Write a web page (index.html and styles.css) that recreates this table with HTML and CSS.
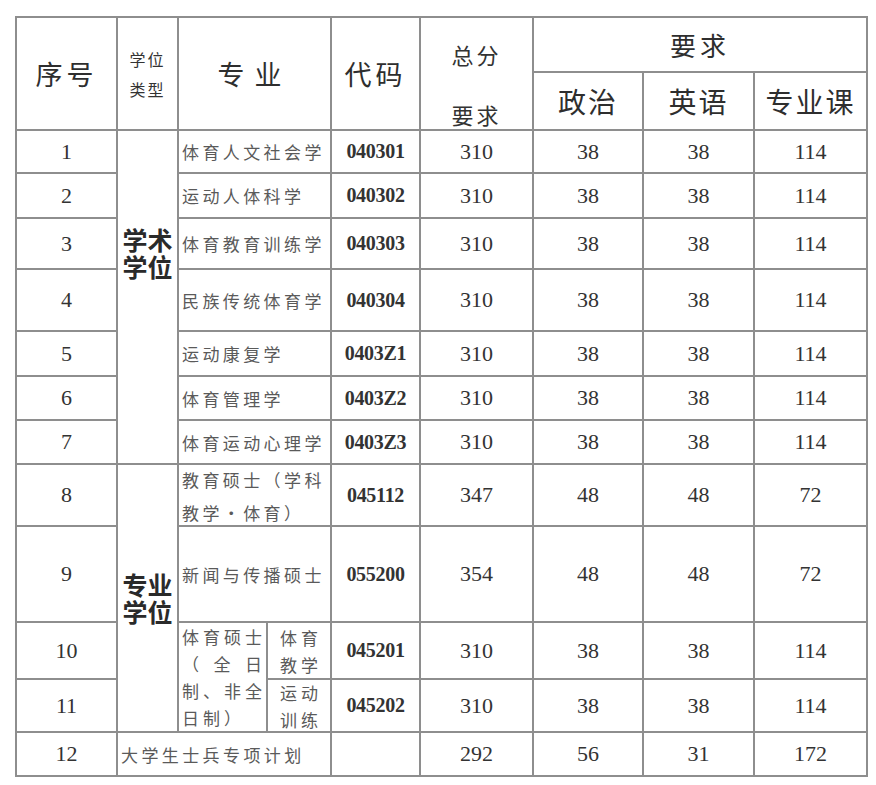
FILE: index.html
```html
<!DOCTYPE html>
<html lang="zh-CN">
<head>
<meta charset="utf-8">
<title>复试分数线</title>
<link rel="stylesheet" href="styles.css">
</head>
<body>
<table class="score">
  <colgroup>
    <col class="c-seq"><col class="c-type"><col class="c-ma"><col class="c-mb"><col class="c-code"><col class="c-total"><col class="c-pol"><col class="c-eng"><col class="c-course">
  </colgroup>
  <tr class="h1">
    <td rowspan="2" class="hd">序号</td>
    <td rowspan="2" class="hd-small">学位<br>类型</td>
    <td rowspan="2" colspan="2" class="hd hd-major">专业</td>
    <td rowspan="2" class="hd">代码</td>
    <td rowspan="2" class="hd-total"><span class="ln">总分</span><span class="ln ln2">要求</span></td>
    <td colspan="3" class="hd hd-req">要求</td>
  </tr>
  <tr class="h2">
    <td class="hd hd-sub">政治</td>
    <td class="hd hd-sub">英语</td>
    <td class="hd hd-sub">专业课</td>
  </tr>
  <tr class="r1">
    <td class="num">1</td>
    <td rowspan="7" class="type type-top">学术<br>学位</td>
    <td colspan="2" class="name">体育人文社会学</td>
    <td class="code">040301</td>
    <td class="num">310</td><td class="num">38</td><td class="num">38</td><td class="num">114</td>
  </tr>
  <tr class="r2">
    <td class="num">2</td>
    <td colspan="2" class="name">运动人体科学</td>
    <td class="code">040302</td>
    <td class="num">310</td><td class="num">38</td><td class="num">38</td><td class="num">114</td>
  </tr>
  <tr class="r3">
    <td class="num">3</td>
    <td colspan="2" class="name">体育教育训练学</td>
    <td class="code">040303</td>
    <td class="num">310</td><td class="num">38</td><td class="num">38</td><td class="num">114</td>
  </tr>
  <tr class="r4">
    <td class="num">4</td>
    <td colspan="2" class="name">民族传统体育学</td>
    <td class="code">040304</td>
    <td class="num">310</td><td class="num">38</td><td class="num">38</td><td class="num">114</td>
  </tr>
  <tr class="r5">
    <td class="num">5</td>
    <td colspan="2" class="name">运动康复学</td>
    <td class="code">0403Z1</td>
    <td class="num">310</td><td class="num">38</td><td class="num">38</td><td class="num">114</td>
  </tr>
  <tr class="r6">
    <td class="num">6</td>
    <td colspan="2" class="name">体育管理学</td>
    <td class="code">0403Z2</td>
    <td class="num">310</td><td class="num">38</td><td class="num">38</td><td class="num">114</td>
  </tr>
  <tr class="r7">
    <td class="num">7</td>
    <td colspan="2" class="name">体育运动心理学</td>
    <td class="code">0403Z3</td>
    <td class="num">310</td><td class="num">38</td><td class="num">38</td><td class="num">114</td>
  </tr>
  <tr class="r8">
    <td class="num">8</td>
    <td rowspan="4" class="type">专业<br>学位</td>
    <td colspan="2" class="name name-wrap"><div class="wrap2">教育硕士（学科<br>教学・体育）</div></td>
    <td class="code">045112</td>
    <td class="num">347</td><td class="num">48</td><td class="num">48</td><td class="num">72</td>
  </tr>
  <tr class="r9">
    <td class="num">9</td>
    <td colspan="2" class="name">新闻与传播硕士</td>
    <td class="code">055200</td>
    <td class="num">354</td><td class="num">48</td><td class="num">48</td><td class="num">72</td>
  </tr>
  <tr class="r10">
    <td class="num">10</td>
    <td rowspan="2" class="name-just"><span class="jl">体育硕士</span><span class="jl">（全日</span><span class="jl">制、非全</span><span class="jl last">日制）</span></td>
    <td class="sub"><div class="sub-box">体育<br>教学</div></td>
    <td class="code">045201</td>
    <td class="num">310</td><td class="num">38</td><td class="num">38</td><td class="num">114</td>
  </tr>
  <tr class="r11">
    <td class="num">11</td>
    <td class="sub"><div class="sub-box">运动<br>训练</div></td>
    <td class="code">045202</td>
    <td class="num">310</td><td class="num">38</td><td class="num">38</td><td class="num">114</td>
  </tr>
  <tr class="r12">
    <td class="num">12</td>
    <td colspan="3" class="name">大学生士兵专项计划</td>
    <td class="code"></td>
    <td class="num">292</td><td class="num">56</td><td class="num">31</td><td class="num">172</td>
  </tr>
</table>
</body>
</html>
```
FILE: styles.css
```css
html, body {
  margin: 0;
  padding: 0;
  background: #ffffff;
}
body {
  padding: 16px 0 0 15px;
}
.score {
  border-collapse: collapse;
  table-layout: fixed;
  width: 851px;
  color: #333333;
}
.score td {
  border: 2px solid #8e8e8e;
  padding: 0;
  text-align: center;
  vertical-align: middle;
  overflow: hidden;
}
.c-seq { width: 101px; }
.c-type { width: 61px; }
.c-ma { width: 89px; }
.c-mb { width: 64px; }
.c-code { width: 89px; }
.c-total { width: 113px; }
.c-pol { width: 110px; }
.c-eng { width: 111px; }
.c-course { width: 113px; }

.h1 { height: 55px; }
.h2 { height: 58px; }
.r1 { height: 43px; }
.r2 { height: 45px; }
.r3 { height: 51px; }
.r4 { height: 62px; }
.r5 { height: 45px; }
.r6 { height: 44px; }
.r7 { height: 44px; }
.r8 { height: 62px; }
.r9 { height: 96px; }
.r10 { height: 57px; }
.r11 { height: 53px; }
.r12 { height: 44px; }

.hd {
  font-family: "Noto Sans CJK SC", sans-serif;
  font-size: 27px;
  letter-spacing: 4px;
  line-height: 30px;
  color: #2e2e2e;
}
.hd-major { letter-spacing: 10px; padding-left: 8px; }
.hd-req { padding-top: 12px; font-size: 26px; }
.hd-sub { font-size: 28px; letter-spacing: 2px; padding-top: 4px; }
.hd-small {
  font-family: "Noto Sans CJK SC", sans-serif;
  font-size: 16px;
  line-height: 30px;
  letter-spacing: 2px;
  color: #333333;
}
.hd-total {
  font-family: "Noto Sans CJK SC", sans-serif;
  font-size: 22px;
  letter-spacing: 3px;
  vertical-align: top !important;
  padding-top: 21px !important;
}
.hd-total .ln {
  display: block;
  line-height: 30px;
}
.hd-total .ln2 {
  margin-top: 30px;
}

.num {
  font-family: "Liberation Serif", "Times New Roman", serif;
  font-size: 22px;
  color: #333333;
}
.code {
  font-family: "Liberation Serif", "Times New Roman", serif;
  font-size: 20px;
  font-weight: bold;
  color: #333333;
  letter-spacing: -0.3px;
}
.name {
  font-family: "Noto Sans CJK SC", sans-serif;
  font-size: 17px;
  letter-spacing: 3.4px;
  color: #5a5a5a;
  text-align: left !important;
  padding-left: 3px !important;
  white-space: nowrap;
}
.name-wrap .wrap2 {
  height: 56px;
  line-height: 33px;
  display: flex;
  flex-direction: column;
  justify-content: center;
  white-space: nowrap;
  padding-top: 1px;
}
.type {
  font-family: "Noto Sans CJK SC", sans-serif;
  font-size: 25px;
  font-weight: bold;
  line-height: 27px;
  color: #2a2a2a;
  letter-spacing: 0;
}
.type-top {
  vertical-align: top !important;
  padding-top: 95px !important;
}
.name-just {
  font-family: "Noto Sans CJK SC", sans-serif;
  font-size: 17px;
  line-height: 27px;
  color: #5a5a5a;
  padding: 0 4px 0 3px !important;
  text-align: justify !important;
}
.name-just .jl {
  display: block;
  text-align: justify;
  text-align-last: justify;
}
.name-just .jl.last {
  text-align-last: left;
  letter-spacing: 4px;
}
.sub {
  font-family: "Noto Sans CJK SC", sans-serif;
  font-size: 17px;
  letter-spacing: 4px;
  padding-left: 4px !important;
  color: #5a5a5a;
}
.sub-box {
  height: 48px;
  line-height: 27px;
  display: flex;
  flex-direction: column;
  justify-content: center;
}
```
